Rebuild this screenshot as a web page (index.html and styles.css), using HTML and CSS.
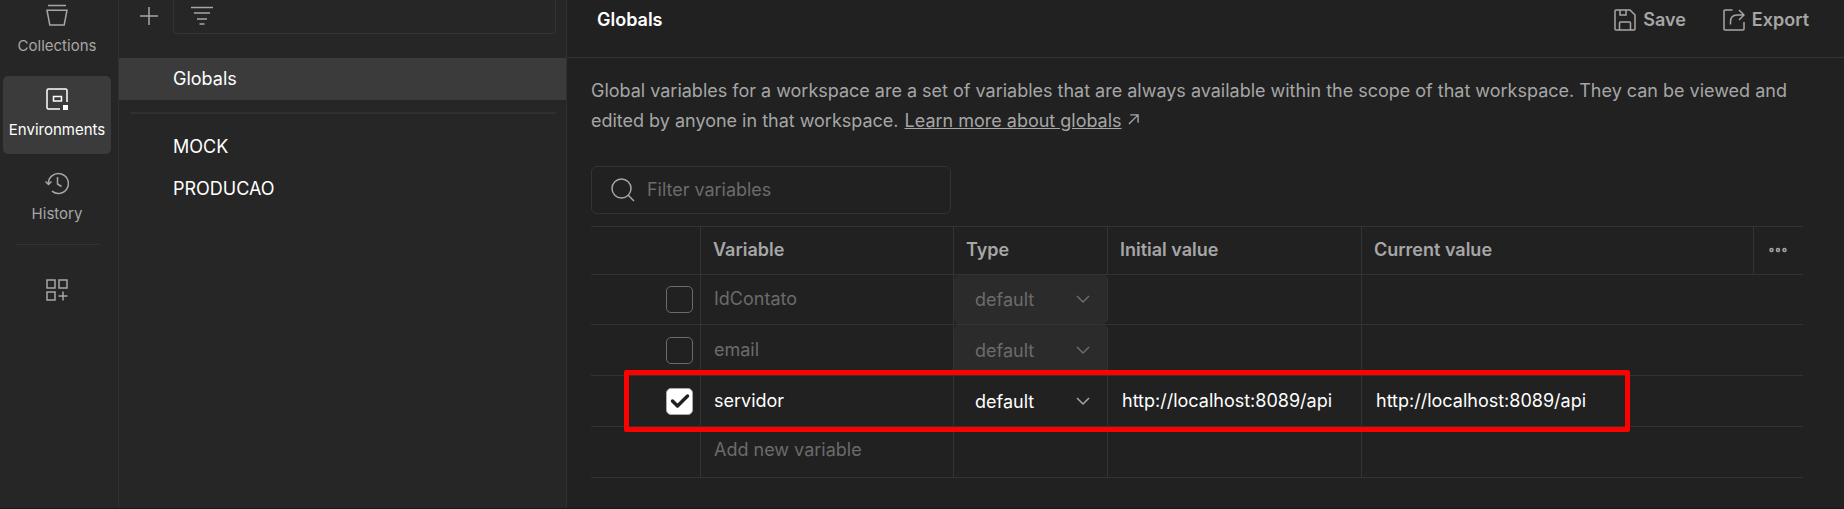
FILE: index.html
```html
<!DOCTYPE html>
<html lang="en">
<head>
<meta charset="utf-8">
<title>Globals</title>
<link rel="stylesheet" href="styles.css">
</head>
<body>
<div class="app">
  <nav class="rail">
    <div class="rail-item rail-first">
      <svg class="icon" width="24" height="24" viewBox="0 0 24 24"><path d="M3 2.500h18M2 7.200h20l-2.800 14.800H4.800z"/></svg>
      <span>Collections</span>
    </div>
    <div class="rail-item active">
      <svg class="icon" width="24" height="24" viewBox="0 0 24 24"><path d="M15 22H3.500Q2 22 2 20.500V3.500Q2 2 3.500 2h17Q22 2 22 3.500V15M8.500 9.500h8v4.500h-8z"/><path class="solid" d="M18 18h5v5h-5z"/></svg>
      <span>Environments</span>
    </div>
    <div class="rail-item">
      <svg class="icon" width="24" height="24" viewBox="0 0 24 24"><path d="M3.400 13A10 10 0 1 1 7 20.200M.5 10.500l3 3 3-3M12.500 6v7l4 2.500"/></svg>
      <span>History</span>
    </div>
    <div class="rail-line"></div>
    <svg class="icon rail-apps" width="24" height="24" viewBox="0 0 24 24"><path d="M2 2h8v8H2zM14 2h8v8h-8zM2 14h8v8H2zM18 13.500v9M13.500 18h9"/></svg>
  </nav>
  <aside class="sidebar">
    <div class="side-tools">
      <svg class="icon plus" width="20" height="20" viewBox="0 0 20 20"><path d="M10 1v18M1 10h18"/></svg>
      <div class="side-filter">
        <svg class="icon" width="22" height="20" viewBox="0 0 22 20"><path d="M0 1.500h22M3 7h16M6 13h10M8.500 18h5"/></svg>
      </div>
    </div>
    <div class="env selected">Globals</div>
    <div class="side-line"></div>
    <div class="env">MOCK</div>
    <div class="env">PRODUCAO</div>
  </aside>
  <main class="main">
    <header class="head">
      <h1>Globals</h1>
      <div class="actions">
        <div class="action"><svg class="icon" width="22" height="22" viewBox="0 0 22 22"><path d="M2 1h14l5 5v14q0 1-1 1H2q-1 0-1-1V2q0-1 1-1zM6 1v5h6V1M5.500 21v-7q0-1 1-1h9q1 0 1 1v7"/></svg>Save</div>
        <div class="action"><svg class="icon" width="22" height="22" viewBox="0 0 22 22"><path d="M9.500 1H2Q1 1 1 2v18q0 1 1 1h18q1 0 1-1v-7M7.500 15.500V13Q7.500 6 14 6h7M16 1l5 5-5 5"/></svg>Export</div>
      </div>
    </header>
    <p class="intro">Global variables for a workspace are a set of variables that are always available within the scope of that workspace. They can be viewed and<br>edited by anyone in that workspace. <a>Learn more about globals</a><svg class="icon ext" width="11" height="11" viewBox="0 0 12 12"><path d="M1 11L10.500 1.500M2.500 1H11v8.500"/></svg></p>
    <div class="search">
      <svg class="icon" width="24" height="24" viewBox="0 0 24 24"><circle cx="10.500" cy="10.500" r="9.500"/><path d="M17 17l6 6"/></svg>
      <span>Filter variables</span>
    </div>
    <div class="table">
      <div class="row header"><div></div><div>Variable</div><div>Type</div><div>Initial value</div><div>Current value</div>
        <div class="more"><svg class="icon" width="18" height="6" viewBox="0 0 18 6"><circle cx="2.500" cy="3" r="1.500"/><circle cx="9" cy="3" r="1.500"/><circle cx="15.500" cy="3" r="1.500"/></svg></div></div>
      <div class="row dim short"><div class="check"><i class="box"></i></div><div>IdContato</div><div class="type"><span>default</span><svg class="icon" width="14" height="9" viewBox="0 0 14 9"><path d="M1 1l6 6 6-6"/></svg></div><div></div><div></div></div>
      <div class="row dim"><div class="check"><i class="box"></i></div><div>email</div><div class="type"><span>default</span><svg class="icon" width="14" height="9" viewBox="0 0 14 9"><path d="M1 1l6 6 6-6"/></svg></div><div></div><div></div></div>
      <div class="row"><div class="check"><i class="box on"><svg width="20" height="16" viewBox="0 0 20 16"><path d="M2.500 8l5 5L17.500 3"/></svg></i></div><div>servidor</div><div class="type"><span>default</span><svg class="icon" width="14" height="9" viewBox="0 0 14 9"><path d="M1 1l6 6 6-6"/></svg></div><div class="url">http://localhost:8089/api</div><div class="url">http://localhost:8089/api</div></div>
      <div class="row dim add"><div></div><div>Add new variable</div><div></div><div></div><div></div></div>
      <div class="highlight"></div>
    </div>
  </main>
</div>
</body>
</html>
```

FILE: styles.css
```css
* { box-sizing: border-box; }
body { margin: 0; background: #212121; font-family: Inter, "Liberation Sans", sans-serif; font-size: 18px; color: #fff; overflow: hidden; }
.app { display: flex; height: 509px; border-bottom: 1px solid #1c1a1b; }
.icon { fill: none; stroke: #a6a6a6; stroke-width: 1.5; flex: none; display: block; }
.rail { width: 119px; flex: none; background: #262626; border-right: 1px solid #303030; display: flex; flex-direction: column; padding-left: 3px; }
.rail-item { width: 108px; height: 78px; margin-bottom: 6px; border-radius: 5px; display: flex; flex-direction: column; align-items: center; padding-top: 11px; font-size: 15px; line-height: 20px; color: #a6a6a6; }
.rail-item span { margin-top: 9px; }
.rail-first { height: 70px; padding-top: 3px; }
.rail-item.active { background: #3b3b3b; color: #fff; }
.active .icon { stroke: #fff; }
.icon .solid { fill: #fff; stroke: none; }
.rail-line { width: 84px; height: 1px; background: #333; margin: 0 0 0 12px; }
.rail-apps { margin: 33px 0 0 42px; }
.sidebar { width: 448px; flex: none; background: #262626; border-right: 1px solid #303030; }
.side-tools { display: flex; height: 58px; padding-left: 20px; }
.plus { margin-top: 6px; }
.side-filter { width: 383px; height: 34px; margin-left: 14px; border: 1px solid #333; border-top: 0; border-radius: 0 0 4px 4px; padding: 6px 0 0 17px; }
.env { height: 42px; line-height: 42px; padding-left: 54px; }
.env.selected { background: #3b3b3b; }
.side-line { height: 2px; background: #303030; margin: 12px 10px 12px 12px; }
.main { flex: 1; min-width: 0; }
.head { height: 58px; border-bottom: 1px solid #333; display: flex; justify-content: space-between; padding: 8px 35px 0 30px; line-height: 24px; }
.head h1 { margin: 0; font-size: 18px; font-weight: 600; }
.actions { display: flex; height: 24px; gap: 37px; }
.action { display: flex; align-items: center; gap: 7px; font-weight: 600; color: #a6a6a6; }
.intro { margin: 18px 0 0 24px; line-height: 30px; color: #a6a6a6; white-space: nowrap; letter-spacing: -0.008px; }
.intro a { text-decoration: underline; margin-left: 1px; }
.ext { display: inline-block; margin-left: 6px; vertical-align: 2px; }
.search { width: 360px; height: 48px; margin: 30px 0 12px 24px; border: 1px solid #333; border-radius: 6px; display: flex; align-items: center; padding: 0 0 1px 19px; gap: 12px; color: #6b6b6b; letter-spacing: -0.03px; }
.table { width: 1212px; margin-left: 24px; border-top: 1px solid #333; position: relative; }
.row { display: grid; grid-template-columns: 110px 253px 154px 254px 1fr; height: 51px; border-bottom: 1px solid #333; line-height: 49px; }
.row > div { padding-left: 13px; border-right: 1px solid #333; }
.row > div:first-child { padding-left: 0; }
.row > div:last-child { border-right: 0; }
.row > .url { padding-left: 14px; }
.row.header { grid-template-columns: 110px 253px 154px 254px 1fr 49px; height: 48px; line-height: 46px; font-weight: 600; color: #a6a6a6; }
.row.header > div { padding-left: 12px; }
.row.short { height: 50px; line-height: 48px; }
.row.add { line-height: 46px; }
.dim { color: #6b6b6b; }
.row.header > .more { padding: 20px 0 0 15px; }
.row > .check { display: flex; align-items: center; justify-content: flex-end; padding-right: 7px; }
.box { width: 27px; height: 27px; border: 1px solid #6b6b6b; border-radius: 5px; display: flex; align-items: center; justify-content: center; }
.box.on { background: #fff; border-color: #aaa; }
.box svg { fill: none; stroke: #212121; stroke-width: 3.5; stroke-linecap: round; stroke-linejoin: round; flex: none; }
.row > .type { display: flex; align-items: center; justify-content: space-between; padding: 0 17px 0 21px; }
.dim .type { background: #2b2b2b; border-radius: 5px; }
.dim .icon { stroke: #6b6b6b; }
.highlight { position: absolute; left: 33px; top: 143px; width: 1006px; height: 62px; border: 5px solid #f00; border-radius: 2px; }
```
